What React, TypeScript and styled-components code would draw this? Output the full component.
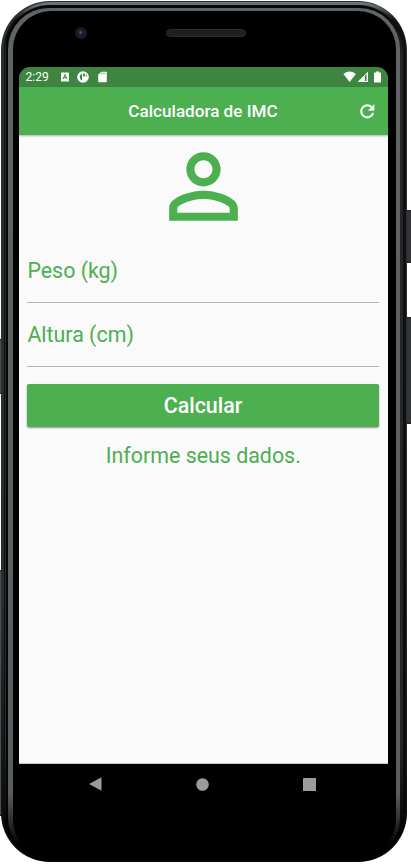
import React from "react";
import styled, { createGlobalStyle } from "styled-components";

const GlobalStyle = createGlobalStyle`
  * { box-sizing: border-box; }
  body { margin: 0; background: #fff; font-family: Roboto, "Liberation Sans", sans-serif; }
`;

const GREEN = "#4caf50";

const Stage = styled.div`
  position: relative;
  width: 411px;
  height: 864px;
  overflow: hidden;
  padding: 1px 4px 2px 1px;
  background: #fff;
`;

const SideKey = styled.span<{ $side: "left" | "right"; $top: number; $length: number }>`
  position: absolute;
  ${(p) => p.$side}: 0;
  top: ${(p) => p.$top}px;
  width: 5px;
  height: ${(p) => p.$length}px;
  background: ${(p) => (p.$side === "left" ? "#4b4d4e" : "#333435")};
  border-radius: ${(p) => (p.$side === "left" ? "0" : "0 1px 1px 0")};
  box-shadow: inset 0 1px 0 #17191a, inset 0 -1px 0 #17191a;
`;

/* Metal shell, built from rings that narrow towards the glass. */
const Shell = styled.div`
  position: relative;
  height: 861px;
  padding: 1px 1px 1px 3px;
  border-radius: 49px;
  background: linear-gradient(#2c3030 0, #2a2d2e 70%, #111 92%, #050505 100%);
`;

const Groove = styled.div`
  height: 100%;
  padding: 3px 3px 1px 1px;
  border-radius: 47px;
  background: linear-gradient(#70767a 0, #686d70 3px, #111 18px, #0c0d0e 90%, #020202 100%);
`;

const Band = styled.div`
  height: 100%;
  padding: 3px 3px 1px 3px;
  border-radius: 45px;
  background:
    linear-gradient(#060707 0, #060707 12px, transparent 50px, transparent 740px, #030303 830px),
    linear-gradient(90deg, #292c2d 0, #292c2d 1px, #050606 1px, #050606 50%, #24262a 50%);
`;

const Highlight = styled.div`
  height: 100%;
  padding: 3px 4px 1px 5px;
  border-radius: 41px;
  background: linear-gradient(#606466 0, #5b5e60 740px, #5b5e60 785px, #000 838px);
`;

const Glass = styled.div`
  display: flex;
  flex-direction: column;
  height: 100%;
  padding: 0 8px 0 6px;
  border-radius: 38px;
  background: #000;
`;

const TopBezel = styled.div`
  position: relative;
  flex: none;
  height: 56px;
`;

const Camera = styled.span`
  position: absolute;
  left: 55.5px;
  top: 16px;
  width: 12px;
  height: 12px;
  border-radius: 50%;
  background: radial-gradient(circle at 46% 45%, #59688f 0, #252c5b 1.5px, #181d36 3px, #191a1c 4px, #1c1d1e 6px);
`;

const Speaker = styled.span`
  position: absolute;
  left: 146.5px;
  top: 18px;
  width: 80px;
  height: 8px;
  border: 1px solid #2b2b2b;
  border-radius: 4px;
  background: repeating-linear-gradient(90deg, #1b1b1b 0, #1b1b1b 1px, #242424 1px, #242424 2px);
`;

const Screen = styled.main`
  display: flex;
  flex-direction: column;
  flex: none;
  width: 369px;
  height: 737px;
  overflow: hidden;
  border-radius: 11px;
  background: #000;
`;

const StatusBar = styled.div`
  display: flex;
  align-items: center;
  flex: none;
  height: 20px;
  padding: 0 6px 0 6.5px;
  color: #fff;
  background: #3d8540;
  svg { display: block; }
`;

const Clock = styled.span`
  width: 34px;
  font-size: 12px;
  line-height: 20px;
`;

const Notices = styled.div`
  display: flex;
  align-items: center;
  gap: 7.5px;
`;

const Signals = styled.div`
  display: flex;
  align-items: center;
  margin-left: auto;
`;

const AppBar = styled.header`
  display: grid;
  grid-template-columns: 41px 1fr 41px;
  align-items: center;
  flex: none;
  height: 48px;
  color: #fff;
  background: ${GREEN};
  box-shadow: 0 1px 2px rgba(0, 0, 0, 0.3);
  z-index: 1;
`;

const Title = styled.h1`
  margin: 0;
  padding-right: 1px;
  text-align: center;
  font-size: 17.1px;
  font-weight: 500;
  line-height: 20px;
  white-space: nowrap;
`;

const RefreshButton = styled.button`
  display: flex;
  padding: 0 0 0 9.5px;
  border: 0;
  color: inherit;
  background: none;
`;

const Form = styled.form`
  display: flex;
  flex-direction: column;
  flex: 1;
  padding: 0 9px 0 8px;
  color: ${GREEN};
  font-size: 21.4px;
  background: #fafafa;
  border-bottom: 1px solid #c4c4c4;
`;

const Avatar = styled.div`
  display: flex;
  justify-content: center;
  height: 103px;
`;

const Field = styled.label`
  height: 64.5px;
  padding: 19.5px 0 0 0.4px;
  line-height: 26px;
  border-bottom: 1px solid #b4b4b4;
`;

const Submit = styled.button`
  height: 42.5px;
  margin-top: 17px;
  padding: 0;
  border: 0;
  border-radius: 2px;
  color: #fff;
  background: ${GREEN};
  font: 500 21.4px/43px Roboto, "Liberation Sans", sans-serif;
  box-shadow: 0 1px 2px rgba(0, 0, 0, 0.4);
`;

const Result = styled.p`
  margin: 16.5px 0 0;
  padding-left: 0.5px;
  text-align: center;
  line-height: 26px;
`;

const NavBar = styled.nav`
  display: flex;
  align-items: center;
  justify-content: space-between;
  flex: none;
  height: 40px;
  padding: 0 72px 0 70px;
  background: #000;
`;

const PERSON =
  "M12 5.9c1.16 0 2.1.94 2.1 2.1s-.94 2.1-2.1 2.1S9.9 9.16 9.9 8s.94-2.1 2.1-2.1m0 9c2.97 0 6.1 1.46 6.1 2.1v1.1H5.9V17c0-.64 3.13-2.1 6.1-2.1M12 4C9.79 4 8 5.79 8 8s1.79 4 4 4 4-1.79 4-4-1.79-4-4-4zm0 9c-2.67 0-8 1.34-8 4v3h16v-3c0-2.66-5.33-4-8-4z";
const REFRESH =
  "M17.65 6.35C16.2 4.9 14.21 4 12 4c-4.42 0-7.99 3.58-7.99 8s3.57 8 7.99 8c3.73 0 6.84-2.55 7.73-6h-2.08c-.82 2.33-3.04 4-5.65 4-3.31 0-6-2.69-6-6s2.69-6 6-6c1.66 0 3.14.69 4.22 1.78L13 11h7V4l-2.35 2.35z";

const LetterIcon = () => (
  <svg width="10" height="10" viewBox="0 0 10 10">
    <rect x="1" y="0.5" width="8" height="9" rx="0.6" fill="#fff" />
    <path d="M3 7.2 5 2.6 7 7.2M3.8 5.7h2.4" fill="none" stroke="#3d8540" strokeWidth="1" />
  </svg>
);

const CircleIcon = () => (
  <svg width="12" height="12" viewBox="0 0 12 12">
    <circle cx="6" cy="6" r="5.8" fill="#fff" />
    <path d="M5.1 2.5v7.2A3.9 3.9 0 0 1 5.1 2.5zM6.2 2.4h1.7v3H6.2zM8.8 2.9q1.3 1 1.2 2.5H8.8z" fill="#3d8540" />
  </svg>
);

const CardIcon = () => (
  <svg width="12" height="12" viewBox="0 0 12 12">
    <path d="M4.3.7H9q.8 0 .8.8v9q0 .8-.8.8H2q-.8 0-.8-.8V3.8z" fill="#fff" />
    <path d="M4.6 1.6v1.6M6.3 1.6v1.6M8 1.6v1.6" stroke="#3d8540" strokeWidth=".7" />
  </svg>
);

export default function App() {
  return (
    <>
      <GlobalStyle />
      <Stage>
        <SideKey $side="left" $top={339} $length={55} />
        <SideKey $side="left" $top={570} $length={246} />
        <SideKey $side="right" $top={210} $length={53} />
        <SideKey $side="right" $top={317} $length={107} />
        <Shell>
          <Groove>
            <Band>
              <Highlight>
                <Glass>
                  <TopBezel>
                    <Camera />
                    <Speaker />
                  </TopBezel>
                  <Screen>
                    <StatusBar>
                      <Clock>2:29</Clock>
                      <Notices>
                        <LetterIcon />
                        <CircleIcon />
                        <CardIcon />
                      </Notices>
                      <Signals>
                        <svg width="39" height="12" viewBox="0 0 39 12" fill="#fff">
                          <path d="M0.4 3Q6.6-1.8 12.9 3L6.6 11z" />
                          <path d="M14.5 11 25 0.7V11zM21.8 5v5h1.8V3.3z" fillRule="evenodd" />
                          <path d="M31.5 1.5H33V.5h3v1h1.5q.5 0 .5.5v9q0 .5-.5.5h-6q-.5 0-.5-.5V2q0-.5.5-.5z" />
                        </svg>
                      </Signals>
                    </StatusBar>
                    <AppBar>
                      <span />
                      <Title>Calculadora de IMC</Title>
                      <RefreshButton type="button" aria-label="Atualizar">
                        <svg width="20.6" height="20.6" viewBox="0 0 24 24" fill="#fff">
                          <path d={REFRESH} stroke="#fff" strokeWidth=".4" />
                        </svg>
                      </RefreshButton>
                    </AppBar>
                    <Form>
                      <Avatar>
                        <svg width="103" height="103" viewBox="0 0 24 24" fill={GREEN}>
                          <path d={PERSON} />
                        </svg>
                      </Avatar>
                      <Field>Peso (kg)</Field>
                      <Field>Altura (cm)</Field>
                      <Submit type="button">Calcular</Submit>
                      <Result>Informe seus dados.</Result>
                    </Form>
                    <NavBar>
                      <svg width="13" height="14" viewBox="0 0 13 14">
                        <path d="M0 7 12.5.2v13.6z" fill="#9c9c9c" />
                      </svg>
                      <svg width="13" height="13" viewBox="0 0 13 13">
                        <circle cx="6.5" cy="6.5" r="6.3" fill="#9c9c9c" />
                      </svg>
                      <svg width="13" height="13" viewBox="0 0 13 13">
                        <rect width="13" height="13" rx=".5" fill="#9c9c9c" />
                      </svg>
                    </NavBar>
                  </Screen>
                </Glass>
              </Highlight>
            </Band>
          </Groove>
        </Shell>
      </Stage>
    </>
  );
}
